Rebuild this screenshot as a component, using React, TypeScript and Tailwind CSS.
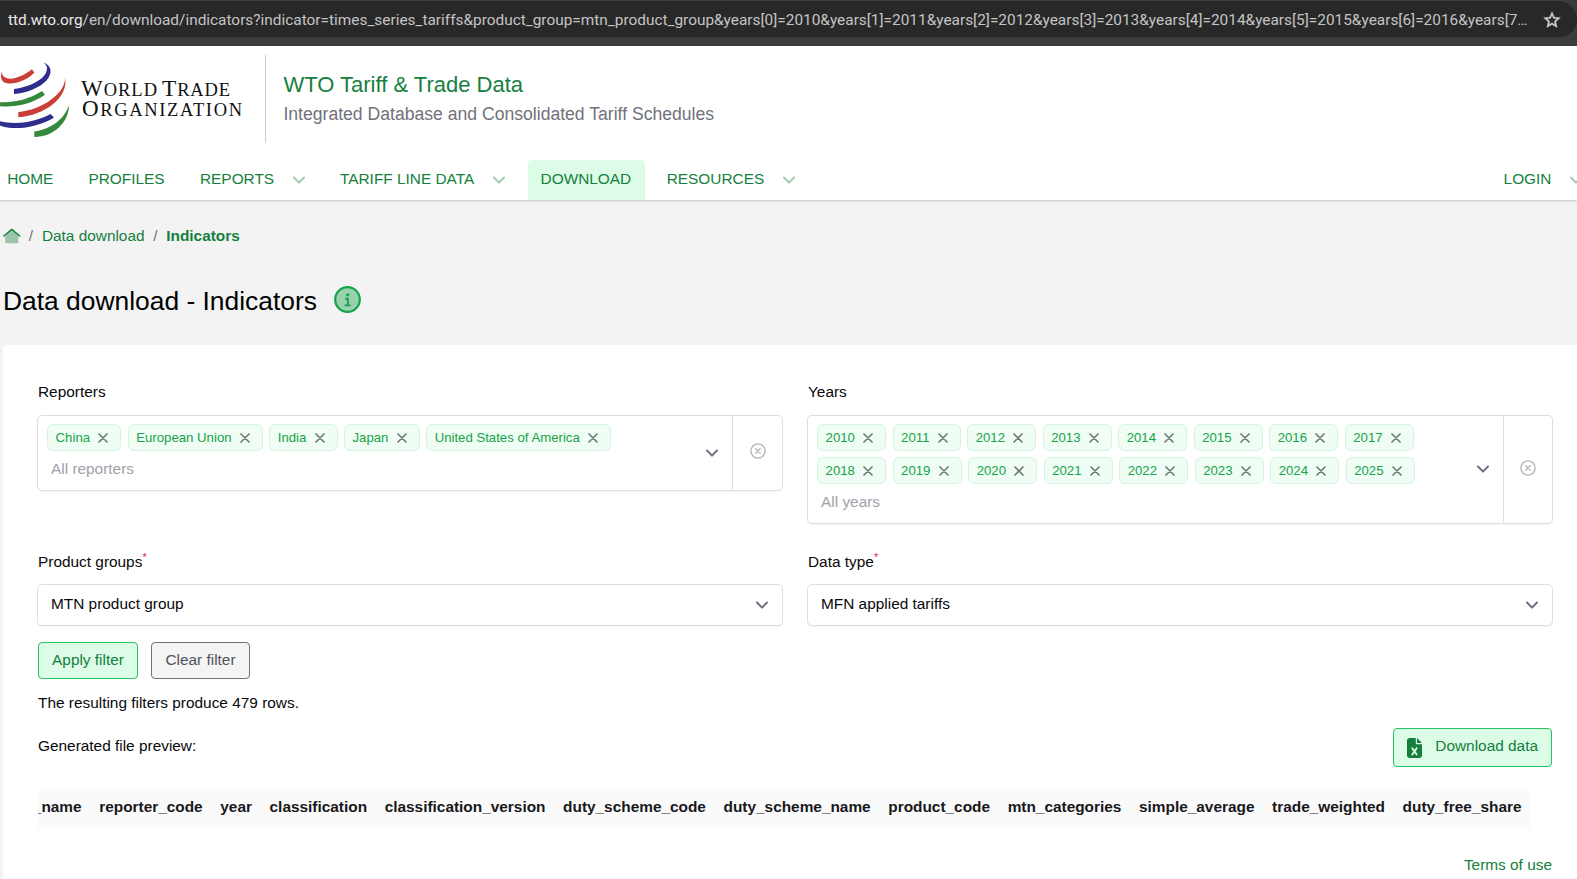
import React from "react";
import { FaFileExcel } from "react-icons/fa6";
import { MdStarOutline } from "react-icons/md";

function Chevron({ className }: { className: string }) {
  return (
    <svg viewBox="0 0 12 8" className={"h-2 w-3 shrink-0 " + className} fill="none" stroke="currentColor" strokeWidth="2" strokeLinecap="round" strokeLinejoin="round">
      <path d="M1 1.500 6 6.600 11 1.500" />
    </svg>
  );
}

function Logo() {
  return (
    <svg viewBox="0 55 250 90" className="h-[90px] w-[250px] shrink-0">
      <path fill="#c93e36" d="M2 71.500C0 77 1 82 7 83.300C16 84.500 27 80 34.300 72.800L32 69.300C24 75.500 15 79.500 8 78.500C4 77.500 2 76 2 71.500Z" />
      <path fill="#302e8c" d="M43.500 62.700C49.500 66 47.500 74 40 79.500C33 84.500 23 88 14 89L14 94C27 93 40 87.500 46.500 80.500C53 73 51.500 65 43.500 62.700Z" />
      <path fill="#338a3c" d="M-8 101C5 104 25 102 42 91L45 94.800C28 106.500 8 108.500 -8 105Z" />
      <path fill="#c93e36" d="M65 77.500C66 93 42 110 18.300 112L18.300 117.300C45 115.500 69 97 65 77.500Z" />
      <path fill="#302e8c" d="M-4 120C10 125 32 124 50.500 114L54 117.500C38 128 12 131 -1 125Z" />
      <path fill="#338a3c" d="M69 105C65 118 52 129 34.300 131.500V137C54 137 69 122 69 105Z" />
      <g fill="#111" fontFamily="Liberation Serif, serif">
        <text x="81" y="95.700" fontSize="18.500" textLength="76" lengthAdjust="spacing"><tspan fontSize="23">W</tspan>ORLD</text>
        <text x="162" y="95.700" fontSize="18.500" textLength="68" lengthAdjust="spacing"><tspan fontSize="23.500">T</tspan>RADE</text>
        <text x="82" y="116.300" fontSize="18.500" textLength="160" lengthAdjust="spacing"><tspan fontSize="23">O</tspan>RGANIZATION</text>
      </g>
    </svg>
  );
}

function Chip({ label }: { label: string }) {
  return (
    <span className="flex h-[27px] items-center rounded-[6px] border border-[#d3f5df] bg-[#f0fdf4] pr-3 pl-[7.600px] text-[13.200px] leading-none text-[#16a34a]">
      {label}
      <svg viewBox="0 0 10 10" className="ml-[8.200px] size-2.5" stroke="#737b76" strokeWidth="1.700" strokeLinecap="round">
        <path d="M1 1 9 9M9 1 1 9" />
      </svg>
    </span>
  );
}

function MultiSelect({ items, placeholder, clearWidth }: { items: string[]; placeholder: string; clearWidth: string }) {
  return (
    <div className="flex w-[746px] rounded-[5px] border border-[#dedee1] bg-white shadow-[0_1px_1px_rgba(0,0,0,0.04)]">
      <div className="flex flex-1 items-center border-r border-[#dedee1] pr-[14.500px] pl-[9px]">
        <div className="flex-1 pt-2">
          <div className="flex max-w-[620px] flex-wrap gap-x-[6.400px] gap-y-1.5">
            {items.map((i) => <Chip key={i} label={i} />)}
          </div>
          <div className="mt-1.5 mb-[10px] pl-[4px] text-[15.400px] leading-[23px] text-[#a1a1aa]">{placeholder}</div>
        </div>
        <Chevron className="-mt-px text-[#6b7080]" />
      </div>
      <div className={"flex items-center justify-center pb-[4px] " + clearWidth}>
        <svg viewBox="0 0 16 16" className="size-4" fill="none" stroke="#b5b5bc" strokeWidth="1.400" strokeLinecap="round">
          <circle cx="8" cy="8" r="7.100" />
          <path d="M5.800 5.800l4.400 4.400M10.200 5.800l-4.400 4.400" />
        </svg>
      </div>
    </div>
  );
}

function Select({ value }: { value: string }) {
  return (
    <div className="flex h-[42px] w-[746px] items-center justify-between rounded-[5px] border border-[#dedee1] bg-white pr-[14.500px] pb-[3px] pl-[13px] shadow-[0_1px_1px_rgba(0,0,0,0.04)]">
      <span>{value}</span>
      <Chevron className="mt-[2px] text-[#6b7080]" />
    </div>
  );
}

function Label({ text, required }: { text: string; required?: boolean }) {
  return (
    <div className="flex h-[23px] items-start pl-px leading-[23px]">
      {text}
      {required && <span className="-mt-[4px] text-[11px] text-[#e11d48]">*</span>}
    </div>
  );
}

const reporters = ["China", "European Union", "India", "Japan", "United States of America"];
const years = Array.from({ length: 16 }, (_, i) => String(2010 + i));
const columns = ["reporter_code", "year", "classification", "classification_version", "duty_scheme_code", "duty_scheme_name", "product_code", "mtn_categories", "simple_average", "trade_weighted", "duty_free_share"];

export default function App() {
  return (
    <div className="h-[879px] w-[1577px] overflow-hidden bg-[#f3f3f3] font-['Liberation_Sans',Arial,sans-serif] text-[15.400px] leading-[23px] text-[#09090b]">
      <div className="h-[46px] bg-[#3c3c3c] pt-px">
        <div className="flex h-[37px] w-full items-center rounded-r-full border-b border-[#323232] bg-[#282828] pl-2 font-[Roboto,sans-serif] text-[15.400px] text-[#c4c4c4]">
          <span className="w-[1519px] pt-[2px] whitespace-nowrap"><span className="text-[#e8e8e8]">ttd.wto.org</span>/en/download/indicators?indicator=times_series_tariffs&amp;product_group=mtn_product_group&amp;years[0]=2010&amp;years[1]=2011&amp;years[2]=2012&amp;years[3]=2013&amp;years[4]=2014&amp;years[5]=2015&amp;years[6]=2016&amp;years[7…</span>
          <MdStarOutline className="mt-[2px] ml-[15px] size-5 stroke-[#d0d0d0] stroke-[0.500px] text-[#d0d0d0]" />
        </div>
      </div>

      <header className="h-[154px] bg-white shadow-[0_1px_2px_rgba(0,0,0,0.2)]">
        <div className="flex h-[114px] pt-[9px]">
          <Logo />
          <div className="ml-[15px] h-[88px] w-px bg-[#d0d0d4]" />
          <div className="ml-[17.400px] pt-[13px]">
            <h1 className="text-[22px] leading-[34px] text-[#15803d]">WTO Tariff &amp; Trade Data</h1>
            <p className="text-[17.600px] leading-6 text-[#71717a]">Integrated Database and Consolidated Tariff Schedules</p>
          </div>
        </div>
        <nav className="flex h-10 w-[1600px] items-center text-[#15803d]">
          <a className="ml-[7.200px] w-[81.300px] pb-[4px]">HOME</a>
          <a className="w-[111.500px] pb-[4px]">PROFILES</a>
          <a className="flex w-[140px] items-center pb-[4px]">REPORTS<Chevron className="mt-[3px] ml-[18.500px] text-[#a1ccb1]" /></a>
          <a className="flex w-[188px] items-center pb-[4px] whitespace-nowrap">TARIFF LINE DATA<Chevron className="mt-[3px] ml-[18.500px] text-[#a1ccb1]" /></a>
          <a className="flex h-10 w-[117px] items-center rounded-t-[4px] bg-[#dcfce7] pb-[4px] pl-[12.600px]">DOWNLOAD</a>
          <a className="ml-[21.700px] flex items-center pb-[4px]">RESOURCES<Chevron className="mt-[3px] ml-[18.500px] text-[#a1ccb1]" /></a>
          <a className="mr-[18px] ml-auto flex items-center pb-[4px]">LOGIN<Chevron className="mt-[3px] ml-[18.500px] text-[#a1ccb1]" /></a>
        </nav>
      </header>

      <div className="flex h-[72px] items-center pb-[2px] pl-[3px] text-[#15803d]">
        <svg viewBox="0 0 18 16" className="mt-px h-4 w-[17.500px]" fill="none">
          <path fill="#9bc4aa" d="M9 2.200 15.700 8v6.200q0 1.300-1.300 1.300H3.600q-1.300 0-1.300-1.300V8Z" />
          <path d="M.9 8 9 1.100 17.100 8" stroke="#15803d" strokeWidth="1.600" strokeLinecap="round" strokeLinejoin="round" />
        </svg>
        <span className="ml-[8.300px] text-[#71717a]">/</span>
        <a className="ml-[8.800px]">Data download</a>
        <span className="ml-[8.800px] text-[#71717a]">/</span>
        <b className="ml-[8.600px]">Indicators</b>
      </div>
      <div className="flex h-[73px] items-start pt-[9px] pl-[3px]">
        <h2 className="text-[26.400px] leading-10 text-black">Data download - Indicators</h2>
        <svg viewBox="0 0 27 27" className="mt-[4.500px] ml-[16.700px] size-[27px]" fill="none" stroke="#16a34a">
          <circle cx="13.500" cy="13.500" r="12.300" strokeWidth="2.200" fill="#99d2ae" />
          <path d="M11.200 12.800h2.700v6.200M10.500 19.400h6.200" strokeWidth="1.900" />
          <circle cx="13.700" cy="8.800" r="1.600" fill="#16a34a" stroke="none" />
        </svg>
      </div>

      <main className="ml-[3px] h-[534px] rounded-tl-[4px] bg-white pt-[35px] pl-[34px]">
        <div className="grid w-[1516px] grid-cols-[746px_746px] justify-between">
          <div className="h-[170px]">
            <Label text="Reporters" />
            <div className="h-3" />
            <MultiSelect items={reporters} placeholder="All reporters" clearWidth="w-[49px]" />
          </div>
          <div className="h-[170px]">
            <Label text="Years" />
            <div className="h-3" />
            <MultiSelect items={years} placeholder="All years" clearWidth="w-[48px]" />
          </div>
          <div>
            <Label text="Product groups" required />
            <div className="h-[11px]" />
            <Select value="MTN product group" />
          </div>
          <div>
            <Label text="Data type" required />
            <div className="h-[11px]" />
            <Select value="MFN applied tariffs" />
          </div>
        </div>
        <div className="mt-4 ml-px flex gap-[13px]">
          <button className="h-[37px] w-[100px] rounded-[4px] border border-[#22c55e] bg-[#dcfce7] pb-[3px] text-[#15803d]">Apply filter</button>
          <button className="h-[37px] w-[99px] rounded-[4px] border border-[#71717a] bg-[#f4f4f5] pb-[3px] text-[#52525b]">Clear filter</button>
        </div>
        <p className="mt-3 ml-px">The resulting filters produce 479 rows.</p>
        <div className="mt-3.5 ml-px flex w-[1514px] justify-between">
          <p className="pt-[6px]">Generated file preview:</p>
          <button className="flex h-[39px] items-center rounded-[4px] border border-[#22c55e] bg-[#dcfce7] pr-[13px] pl-[13px] text-[#15803d]">
            <FaFileExcel className="h-5 w-[15px]" />
            <span className="ml-[13.500px] pb-[5px]">Download data</span>
          </button>
        </div>
        <div className="mt-[22px] ml-px flex h-[39px] w-[1492px] items-center justify-end gap-[17.600px] overflow-hidden bg-[#fafafa] pr-[8.500px] pb-[5px] font-bold whitespace-nowrap text-[#18181b]">
          <span>reporter_name</span>
          {columns.map((c) => <span key={c}>{c}</span>)}
        </div>
        <div className="mt-[25px] w-[1515px] text-right text-[#15803d]">Terms of use</div>
      </main>
    </div>
  );
}
